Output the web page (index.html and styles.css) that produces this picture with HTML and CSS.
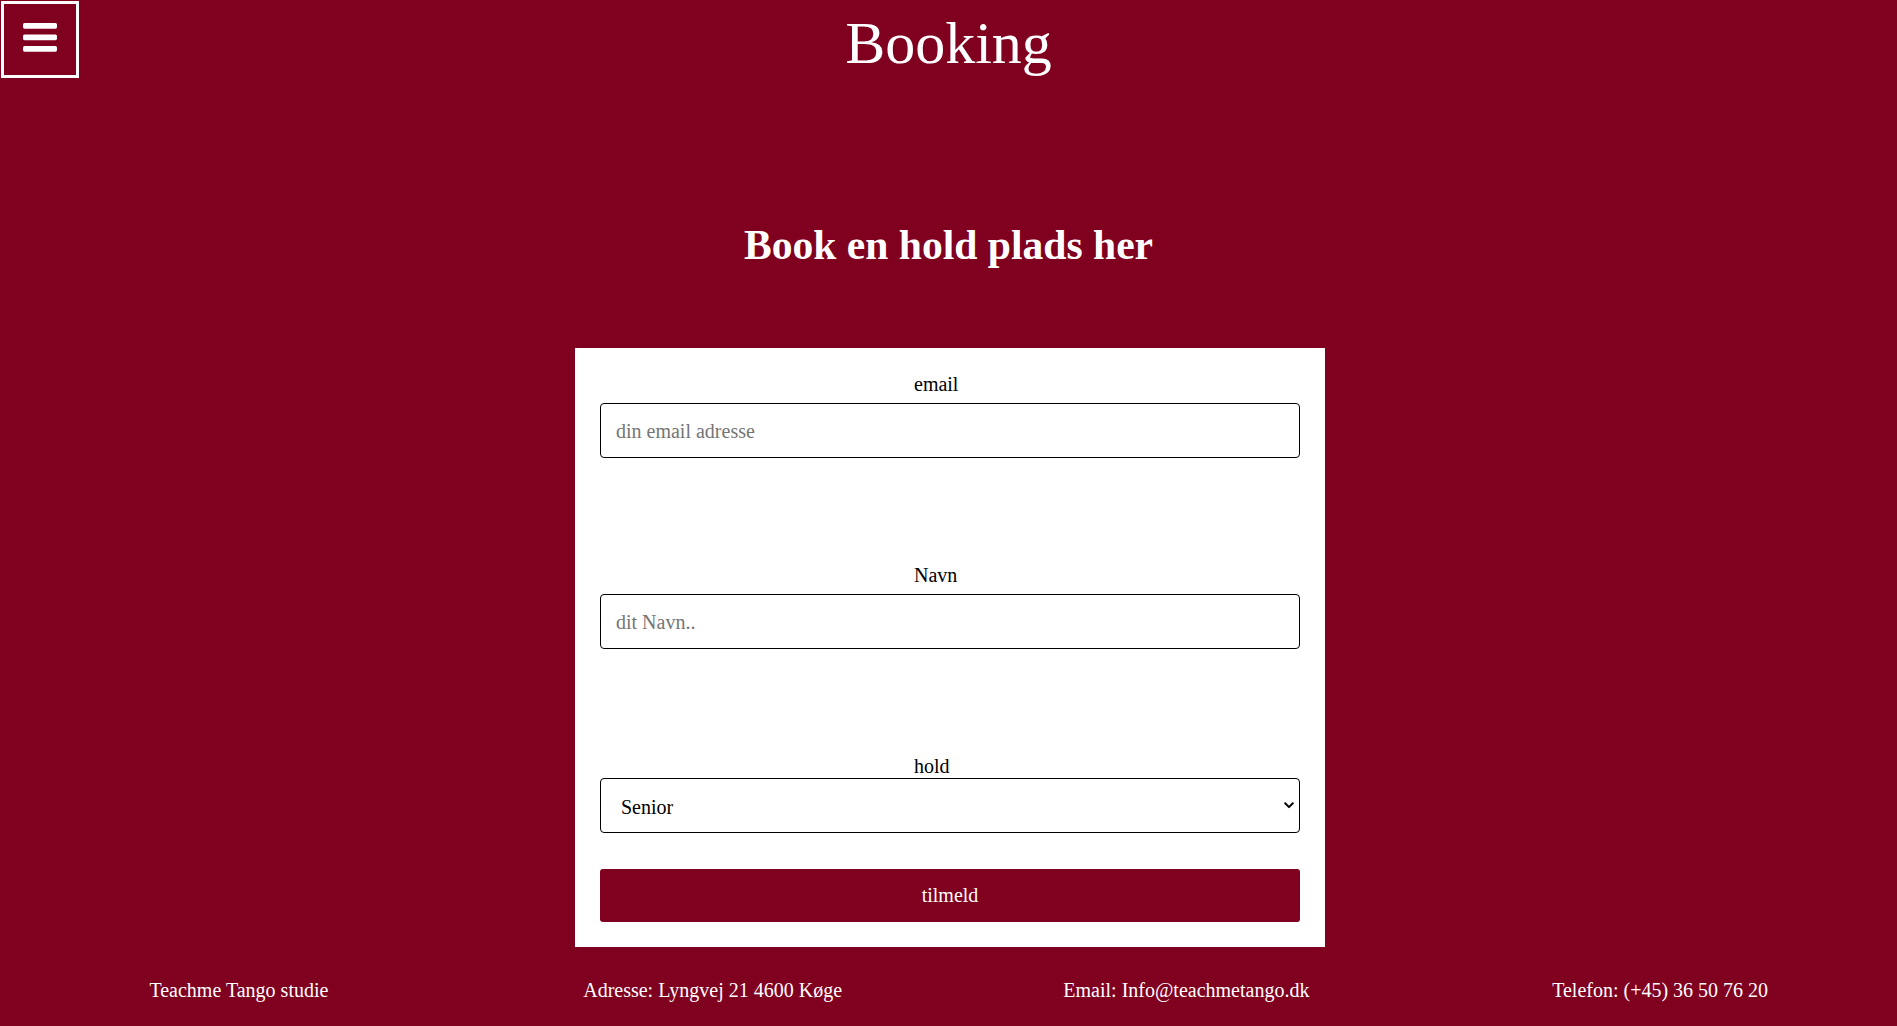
FILE: index.html
```html
<!DOCTYPE html>
<html lang="da">
<head>
<meta charset="utf-8">
<title>Booking</title>
<link rel="stylesheet" href="styles.css">
</head>
<body>
<header class="topbar">
  <button class="menu-btn" type="button" aria-label="Menu">
    <svg class="menu-icon" width="34" height="29" viewBox="0 0 34 29" aria-hidden="true">
      <rect x="0" y="0" width="34" height="5.7" rx="1.6" fill="#fff"/>
      <rect x="0" y="11.5" width="34" height="5.7" rx="1.6" fill="#fff"/>
      <rect x="0" y="23" width="34" height="5.7" rx="1.6" fill="#fff"/>
    </svg>
  </button>
  <h1 class="page-title">Booking</h1>
  <span class="topbar-spacer"></span>
</header>

<main class="content">
  <h2 class="section-title">Book en hold plads her</h2>
  <div class="card-wrap">
    <form class="booking-card">
      <label class="field-label" for="email">email</label>
      <input class="field-input" id="email" type="text" placeholder="din email adresse">

      <label class="field-label field-label--spaced" for="navn">Navn</label>
      <input class="field-input" id="navn" type="text" placeholder="dit Navn..">

      <label class="field-label field-label--spaced" for="hold">hold</label>
      <div class="select-wrap">
        <select class="field-input field-select" id="hold">
          <option>Senior</option>
          <option>Junior</option>
        </select>
        <svg class="select-arrow" width="10" height="7" viewBox="0 0 10 7" aria-hidden="true">
          <path d="M1.2 1.3 L5 5.1 L8.8 1.3" fill="none" stroke="#000" stroke-width="2" stroke-linecap="round" stroke-linejoin="round"/>
        </svg>
      </div>

      <button class="submit-btn" type="button">tilmeld</button>
    </form>
  </div>
</main>

<footer class="site-footer">
  <span class="footer-item">Teachme Tango studie</span>
  <span class="footer-item">Adresse: Lyngvej 21 4600 Køge</span>
  <span class="footer-item">Email: Info@teachmetango.dk</span>
  <span class="footer-item">Telefon: (+45) 36 50 76 20</span>
</footer>
</body>
</html>
```

FILE: styles.css
```css
html, body {
  margin: 0;
  padding: 0;
}

body {
  background: #800020;
  color: #fff;
  font-family: "Liberation Serif", "Times New Roman", serif;
  font-size: 20px;
}

.topbar {
  display: grid;
  grid-template-columns: 1fr auto 1fr;
  align-items: start;
}

.menu-btn {
  justify-self: start;
  margin: 1px;
  width: 78px;
  height: 77px;
  box-sizing: border-box;
  border: 3px solid #fff;
  background: transparent;
  padding: 19px 0 0 19px;
  display: flex;
  align-items: flex-start;
  justify-content: flex-start;
  cursor: pointer;
}

.menu-icon {
  display: block;
}

.page-title {
  margin: 9px 0 0;
  font-size: 60px;
  font-weight: normal;
  line-height: normal;
  text-align: center;
}

.section-title {
  margin: 142px 0 79px;
  text-align: center;
  font-size: 41.6px;
  font-weight: bold;
  line-height: 48px;
}

.card-wrap {
  display: flex;
  justify-content: center;
  padding-left: 3px;
}

.booking-card {
  width: 750px;
  box-sizing: border-box;
  background: #fff;
  padding: 25px;
  display: flex;
  flex-direction: column;
}

.field-label {
  align-self: center;
  width: 72px;
  color: #000;
  line-height: 23px;
  font-size: 20px;
}

.field-label--spaced {
  margin-top: 106px;
}

.field-input {
  margin: 7px 0 0;
  height: 55px;
  width: 100%;
  box-sizing: border-box;
  padding: 2px 15px 0;
  border: 1px solid #000;
  border-radius: 4px;
  font-family: "Liberation Serif", "Times New Roman", serif;
  font-size: 20px;
  color: #000;
  background: #fff;
}

.field-input::placeholder {
  color: #757575;
}

.select-wrap {
  position: relative;
}

.field-select {
  margin-top: 0;
  appearance: none;
  -webkit-appearance: none;
  padding-left: 20px;
  padding-right: 30px;
}

.select-arrow {
  position: absolute;
  right: 6px;
  top: 24px;
  pointer-events: none;
}

.submit-btn {
  margin-top: 36px;
  height: 53px;
  border: 0;
  border-radius: 3px;
  background: #800020;
  color: #fff;
  font-family: "Liberation Serif", "Times New Roman", serif;
  font-size: 20px;
  cursor: pointer;
}

.site-footer {
  display: grid;
  grid-template-columns: repeat(4, 1fr);
  margin-top: 32px;
  padding-left: 2px;
  text-align: center;
  line-height: 23px;
}
```
